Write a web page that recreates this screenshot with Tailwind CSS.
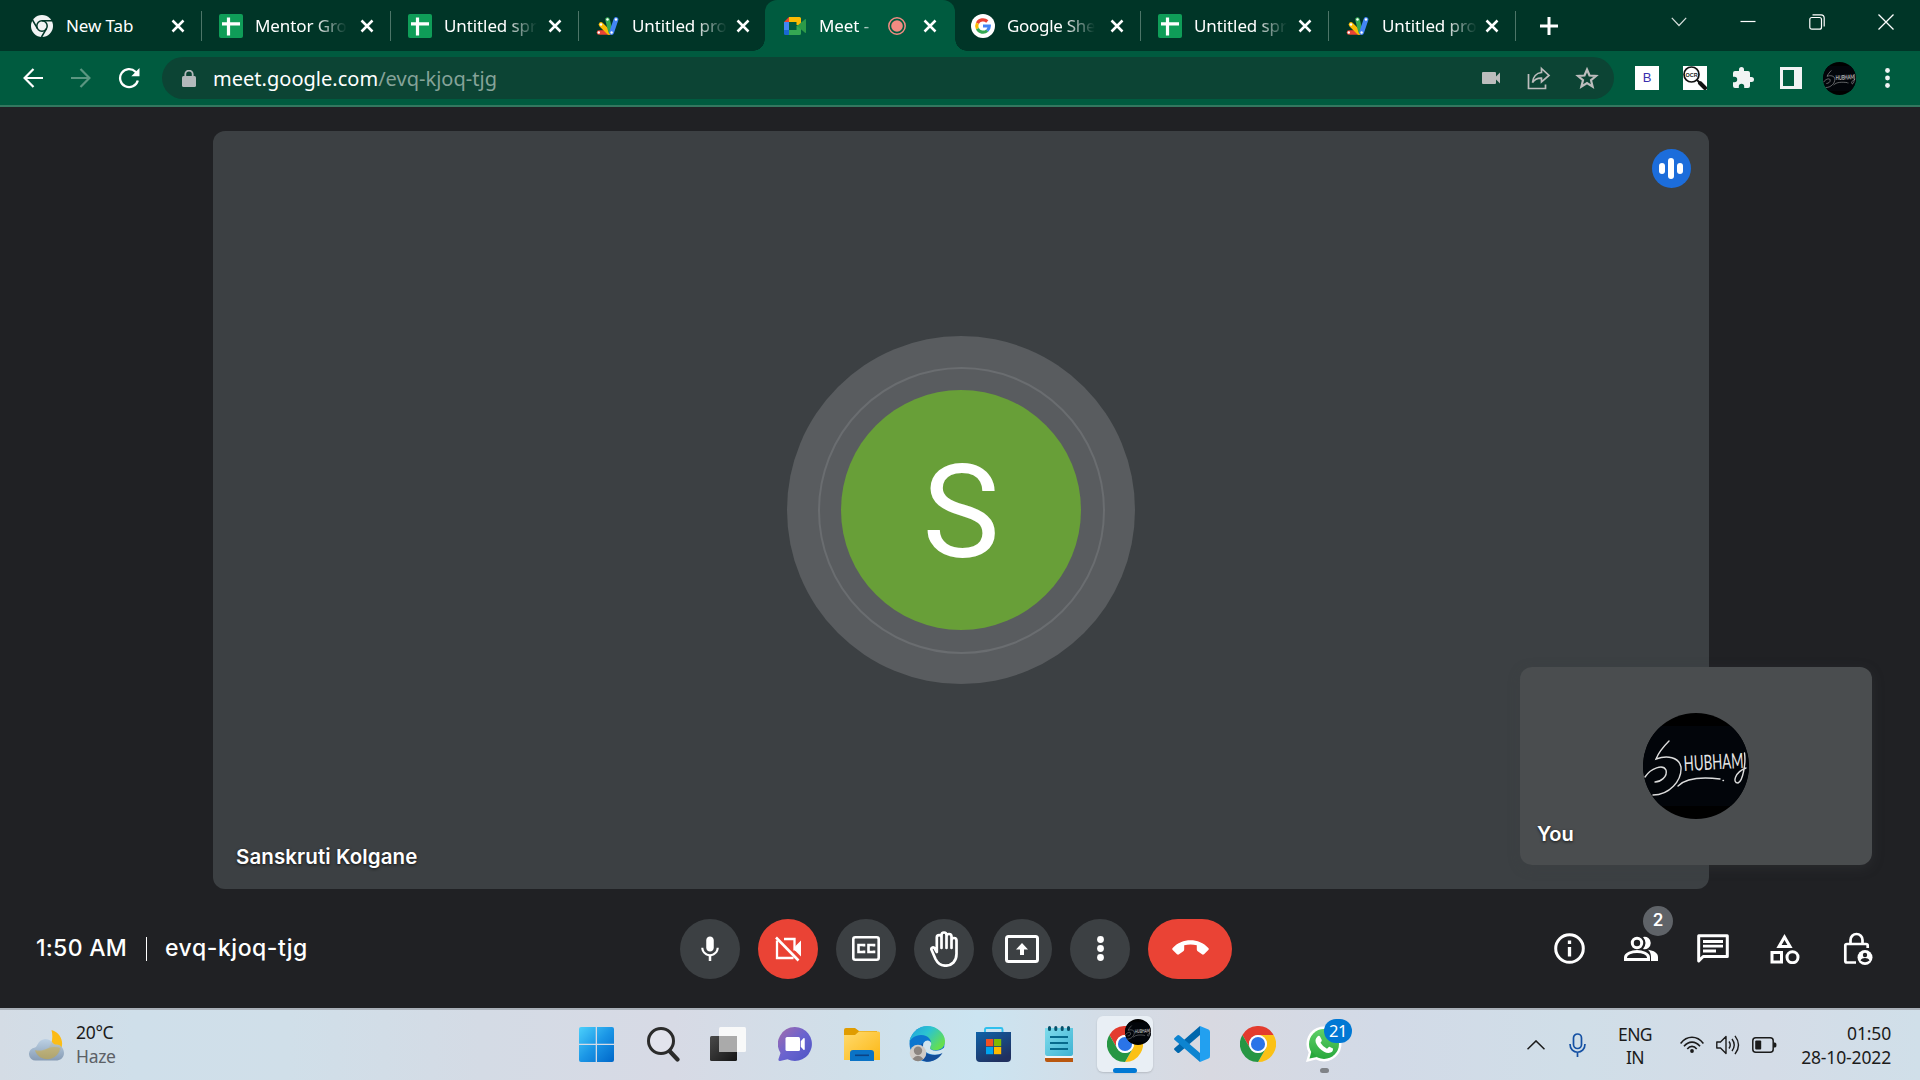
<!DOCTYPE html>
<html lang="en">
<head>
<meta charset="utf-8">
<title>Meet - evq-kjoq-tjg</title>
<script src="https://cdn.jsdelivr.net/npm/@tailwindcss/browser@4"></script>
</head>
<body class="h-[1080px] w-[1920px] overflow-hidden bg-[#202124] font-['Noto_Sans',sans-serif]">

<!-- shared symbols -->
<svg class="absolute h-0 w-0">
  <defs>
    <linearGradient id="gWin" gradientUnits="userSpaceOnUse" x1="0" y1="0" x2="35" y2="35"><stop offset="0" stop-color="#4cd0fb"/><stop offset=".5" stop-color="#1b96e6"/><stop offset="1" stop-color="#0067c9"/></linearGradient>
    <linearGradient id="gDark" x1="0" y1="0" x2="1" y2="1"><stop offset="0" stop-color="#4a4a4a"/><stop offset="1" stop-color="#151515"/></linearGradient>
    <linearGradient id="gChat" x1="0" y1="0" x2="1" y2="1"><stop offset="0" stop-color="#a56cab"/><stop offset=".5" stop-color="#6a63cf"/><stop offset="1" stop-color="#4d55c4"/></linearGradient>
    <linearGradient id="gFold" x1="0" y1="0" x2="1" y2="1"><stop offset="0" stop-color="#ffda6d"/><stop offset="1" stop-color="#fcb714"/></linearGradient>
    <linearGradient id="gEdge" x1="0" y1="0" x2="1" y2=".6"><stop offset="0" stop-color="#1f9fe0"/><stop offset=".5" stop-color="#2cc4d0"/><stop offset="1" stop-color="#66df4e"/></linearGradient>
    <linearGradient id="gStore" x1="0" y1="0" x2=".6" y2="1"><stop offset="0" stop-color="#0f62a8"/><stop offset="1" stop-color="#20305f"/></linearGradient>
    <linearGradient id="gNote" x1="0" y1="0" x2="1" y2="1"><stop offset="0" stop-color="#7fdcec"/><stop offset="1" stop-color="#3fb3d3"/></linearGradient>
    <linearGradient id="gMoon" x1="0" y1="0" x2="0" y2="1"><stop offset="0" stop-color="#fdb913"/><stop offset="1" stop-color="#f9c21a"/></linearGradient>
    <linearGradient id="gCloud" x1="0" y1="0" x2="0" y2="1"><stop offset="0" stop-color="#b9cfe4"/><stop offset="1" stop-color="#7d93ad"/></linearGradient>
    <linearGradient id="gWa" x1="0" y1="0" x2="0" y2="1"><stop offset="0" stop-color="#5fd068"/><stop offset="1" stop-color="#28a83c"/></linearGradient>
  </defs>
  <symbol id="close" viewBox="0 0 14 14"><path d="M1.500 1.500l11 11M12.500 1.500l-11 11" stroke="#fff" stroke-width="2.500"/></symbol>
  <symbol id="sheets" viewBox="0 0 24 24"><rect width="24" height="24" rx="2" fill="#0f9d58"/><path d="M9.500 3.500v18M3 9.800h18" stroke="#fff" stroke-width="3.200"/></symbol>
  <symbol id="script" viewBox="0 0 24 20">
    <path d="M3 16.500h11" stroke="#ea4335" stroke-width="4.600" stroke-linecap="round"/>
    <path d="M5 8.500l8 8" stroke="#fbbc04" stroke-width="4.600" stroke-linecap="round"/>
    <path d="M11.500 3.500l3 12" stroke="#34a853" stroke-width="4.600" stroke-linecap="round"/>
    <path d="M20 3.500l-4.400 13" stroke="#4285f4" stroke-width="4.800" stroke-linecap="round"/>
    <g fill="#fff"><circle cx="2.800" cy="16.500" r="1.200"/><circle cx="5" cy="8.500" r="1.200"/><circle cx="11.500" cy="3.500" r="1.200"/><circle cx="20" cy="3.500" r="1.200"/><circle cx="15.600" cy="16.500" r="1.200"/></g>
  </symbol>
  <symbol id="chrome" viewBox="0 0 48 48">
    <path d="M3.200 12A24 24 0 0 1 44.800 12H24A12 12 0 0 0 13.600 30z" fill="#e33b2e"/>
    <path d="M44.800 12A24 24 0 0 1 24 48L34.400 30A12 12 0 0 0 24 12z" fill="#fbc116"/>
    <path d="M24 48A24 24 0 0 1 3.200 12L13.600 30A12 12 0 0 0 34.400 30z" fill="#269643"/>
    <circle cx="24" cy="24" r="12" fill="#fff"/><circle cx="24" cy="24" r="9.400" fill="#2a74e8"/>
  </symbol>
  <symbol id="signature" viewBox="0 0 106 106">
    <circle cx="53" cy="53" r="53" fill="#000"/><path d="M18.300 13H87.700A53 53 0 0 1 87.700 93H18.300A53 53 0 0 1 18.300 13z" fill="#02050a"/>
    <g fill="none" stroke="#dcdcdc" stroke-width="1.400" stroke-linecap="round">
      <path d="M26 28C20 34 15 41 13 46C24 42 36 44 38 54C39 68 26 82 10 82"/>
      <path d="M2 64C8 55 20 51 23 57C25 64 17 69 12 69"/>
      <path d="M35 73C44 64 60 64 77 66M80 67.500h.5"/>
      <path d="M101.500 40C103 50 100 68 95 70C89 70 92 59 103 55"/>
    </g>
    <text x="41" y="58" font-family="Lato" font-weight="400" font-size="21" fill="#e6e6e6" textLength="60" lengthAdjust="spacingAndGlyphs" transform="rotate(-3 41 58)">HUBHAM</text>
  </symbol>
</svg>

<div class="flex h-full w-full flex-col">

  <!-- tab strip -->
  <header class="flex h-[51px] shrink-0 bg-[#003527] pl-[13px] text-[17px] tracking-[-0.1px] text-white">
    <div class="flex h-full w-[188px] items-center pl-[17px] pr-4">
      <svg class="mr-3 h-6 w-6 shrink-0" viewBox="0 0 24 24"><circle cx="12" cy="12" r="11" fill="#f1f3f4"/><circle cx="12" cy="12" r="5.200" fill="none" stroke="#003527" stroke-width="1.500"/><path d="M12 6.800h10M7.500 14.600L2.500 6M16.500 14.600L11.500 23" stroke="#003527" stroke-width="1.500"/></svg>
      <span class="whitespace-nowrap">New Tab</span>
      <svg class="ml-auto h-[14px] w-[14px] shrink-0"><use href="#close"/></svg>
    </div>
    <div class="flex h-full w-[189px] items-center pr-4">
      <i class="mr-[17px] h-[30px] w-px bg-[#4d7568]"></i>
      <svg class="mr-3 h-6 w-6 shrink-0"><use href="#sheets"/></svg>
      <span class="whitespace-nowrap [mask-image:linear-gradient(90deg,#000_65%,transparent)]">Mentor Gro</span>
      <svg class="ml-auto h-[14px] w-[14px] shrink-0"><use href="#close"/></svg>
    </div>
    <div class="flex h-full w-[188px] items-center pr-4">
      <i class="mr-[17px] h-[30px] w-px bg-[#4d7568]"></i>
      <svg class="mr-3 h-6 w-6 shrink-0"><use href="#sheets"/></svg>
      <span class="whitespace-nowrap [mask-image:linear-gradient(90deg,#000_65%,transparent)]">Untitled spr</span>
      <svg class="ml-auto h-[14px] w-[14px] shrink-0"><use href="#close"/></svg>
    </div>
    <div class="flex h-full w-[187px] items-center pr-[15px]">
      <i class="mr-[17px] h-[30px] w-px bg-[#4d7568]"></i>
      <svg class="mr-3 h-5 w-6 shrink-0"><use href="#script"/></svg>
      <span class="whitespace-nowrap [mask-image:linear-gradient(90deg,#000_65%,transparent)]">Untitled pro</span>
      <svg class="ml-auto h-[14px] w-[14px] shrink-0"><use href="#close"/></svg>
    </div>
    <!-- active tab -->
    <div class="relative flex h-full w-[190px] items-center rounded-t-xl bg-[#005b3f] pl-[18px] pr-[18px]">
      <i class="absolute -left-3 bottom-0 h-3 w-3 bg-[radial-gradient(circle_at_0_0,transparent_11.5px,#005b3f_12px)]"></i>
      <i class="absolute -right-3 bottom-0 h-3 w-3 bg-[radial-gradient(circle_at_100%_0,transparent_11.5px,#005b3f_12px)]"></i>
      <svg class="mr-3 h-[18px] w-6 shrink-0" viewBox="0 0 24 18"><path d="M1 5L6 0V5z" fill="#ea4335"/><path d="M1 5H6V13H1z" fill="#4285f4"/><path d="M1 13H6V18H2.500A1.500 1.500 0 0 1 1 16.500z" fill="#1967d2"/><path d="M6 0H16.500A1.500 1.500 0 0 1 18 1.500V9L13.500 8V5H6z" fill="#fbbc04"/><path d="M6 13H13.500V9L18 8V16.500A1.500 1.500 0 0 1 16.500 18H6z" fill="#34a853"/><path d="M14 9L22 2.200Q23 1.500 23 3V15Q23 16.500 22 15.800z" fill="#2c9a48"/></svg>
      <span class="w-[69px] whitespace-nowrap [mask-image:linear-gradient(90deg,#000_60%,transparent_85%)]">Meet -</span>
      <svg class="h-[18px] w-[18px] shrink-0" viewBox="0 0 18 18"><circle cx="9" cy="9" r="5.800" fill="#f28b82"/><circle cx="9" cy="9" r="8.200" fill="none" stroke="#f28b82" stroke-width="1.500"/></svg>
      <svg class="ml-auto h-[14px] w-[14px] shrink-0"><use href="#close"/></svg>
    </div>
    <div class="flex h-full w-[185px] items-center pl-4 pr-4">
      <svg class="mr-3 h-6 w-6 shrink-0" viewBox="0 0 24 24"><circle cx="12" cy="12" r="12" fill="#fff"/><g fill="none" stroke-width="3.200"><path d="M16.300 7.500A6.300 6.300 0 0 0 6.400 9.200" stroke="#ea4335"/><path d="M6.400 9.200A6.300 6.300 0 0 0 6.400 14.800" stroke="#fbbc04"/><path d="M6.400 14.800A6.300 6.300 0 0 0 16.200 16.600" stroke="#34a853"/><path d="M16.200 16.600A6.300 6.300 0 0 0 18.300 12H12" stroke="#4285f4"/></g></svg>
      <span class="whitespace-nowrap tracking-[-0.3px] [mask-image:linear-gradient(90deg,#000_65%,transparent)]">Google She</span>
      <svg class="ml-auto h-[14px] w-[14px] shrink-0"><use href="#close"/></svg>
    </div>
    <div class="flex h-full w-[188px] items-center pr-4">
      <i class="mr-[17px] h-[30px] w-px bg-[#4d7568]"></i>
      <svg class="mr-3 h-6 w-6 shrink-0"><use href="#sheets"/></svg>
      <span class="whitespace-nowrap [mask-image:linear-gradient(90deg,#000_65%,transparent)]">Untitled spr</span>
      <svg class="ml-auto h-[14px] w-[14px] shrink-0"><use href="#close"/></svg>
    </div>
    <div class="flex h-full w-[187px] items-center pr-4">
      <i class="mr-[17px] h-[30px] w-px bg-[#4d7568]"></i>
      <svg class="mr-3 h-5 w-6 shrink-0"><use href="#script"/></svg>
      <span class="whitespace-nowrap [mask-image:linear-gradient(90deg,#000_65%,transparent)]">Untitled pro</span>
      <svg class="ml-auto h-[14px] w-[14px] shrink-0"><use href="#close"/></svg>
    </div>
    <div class="flex items-center">
      <i class="h-[30px] w-px bg-[#4d7568]"></i>
      <svg class="ml-6 h-[18px] w-[18px]" viewBox="0 0 18 18"><path d="M9 0v18M0 9h18" stroke="#fff" stroke-width="3"/></svg>
    </div>
    <div class="ml-auto grid h-11 w-[276px] grid-cols-4 place-items-center">
      <svg class="h-[10px] w-4" viewBox="0 0 16 10" fill="none" stroke="#d5dedb" stroke-width="1.200"><path d="M.8.800L8 8.500 15.200.800"/></svg>
      <svg class="h-4 w-4" viewBox="0 0 16 16"><path d="M.5 7.500h15" stroke="#fff" stroke-width="1.200"/></svg>
      <svg class="h-4 w-4" viewBox="0 0 16 16" fill="none" stroke="#fff" stroke-width="1.200"><rect x=".8" y="3.500" width="11.700" height="11.700" rx="2"/><path d="M3.500.8H12A3.200 3.200 0 0 1 15.200 4V12.500"/></svg>
      <svg class="h-4 w-4" viewBox="0 0 16 16"><path d="M.5.500l15 15M15.500.500l-15 15" stroke="#fff" stroke-width="1.300"/></svg>
    </div>
  </header>

  <!-- toolbar -->
  <nav class="flex h-14 shrink-0 items-center border-b-2 border-[#33775f] bg-[#005b3f]">
    <div class="flex w-[162px] items-center gap-[28px] pl-[23px]">
      <svg class="h-5 w-5" viewBox="0 0 20 20" fill="none" stroke="#fff" stroke-width="2.200"><path d="M20 10H2M10.500 1L1.600 10l8.900 9"/></svg>
      <svg class="h-5 w-5" viewBox="0 0 20 20" fill="none" stroke="#5b9681" stroke-width="2.200"><path d="M0 10H18M9.500 1l8.900 9-8.900 9"/></svg>
      <svg class="-ml-px h-[22px] w-[22px]" viewBox="0 0 22 22" fill="none" stroke="#fff" stroke-width="2.300"><path d="M19.800 13.500A9 9 0 1 1 17.500 4.800L20 7.500"/><path d="M21.500 1V9.200H13.300z" fill="#fff" stroke="none"/></svg>
    </div>
    <div class="flex h-[42px] w-[1452px] items-center rounded-full bg-[#0c4434] pl-5 pr-[15px]">
      <svg class="mr-[17px] h-[17px] w-[14px]" viewBox="0 0 14 17"><rect x="0" y="6" width="14" height="11" rx="1.500" fill="#b3b9bb"/><path d="M3.300 7V4.300a3.700 3.700 0 0 1 7.400 0V7" fill="none" stroke="#b3b9bb" stroke-width="1.800"/></svg>
      <span class="mt-px text-[20px] tracking-[0.02px] text-white">meet.google.com<span class="text-[#86a399]">/evq-kjoq-tjg</span></span>
      <div class="ml-auto flex items-center gap-6">
        <svg class="h-6 w-6" viewBox="0 0 24 24" fill="#bdbdbd"><path d="M3 7a1 1 0 0 1 1-1h12a1 1 0 0 1 1 1v3.500l4-4v11l-4-4V17a1 1 0 0 1-1 1H4a1 1 0 0 1-1-1z"/></svg>
        <svg class="h-6 w-6" viewBox="0 0 24 24" fill="none" stroke="#bdbdbd" stroke-width="1.700"><path d="M1.500 8v14.500h17V18.500"/><path d="M14.500 2.500L22 9.500l-7.500 6.500v-3.800C10 12 7.500 13.500 5.500 16.500 6 11 9.500 7 14.500 6.500z"/></svg>
        <svg class="h-6 w-6" viewBox="0 0 24 24" fill="none" stroke="#bdbdbd" stroke-width="2.200"><path d="M12 3.500l2.500 6 6.500.5-5 4.200 1.600 6.400L12 17.100 6.400 20.600 8 14.200 3 10l6.500-.5z"/></svg>
      </div>
    </div>
    <div class="ml-[9px] grid w-[288px] grid-cols-6 place-items-center">
      <div class="flex h-6 w-6 items-center justify-center bg-white font-['Liberation_Sans',sans-serif] text-[13px] text-[#3a2fae]">B</div>
      <svg class="h-6 w-6" viewBox="0 0 24 24"><rect width="24" height="24" fill="#fff"/><circle cx="8.500" cy="8.500" r="7.500" fill="#fff" stroke="#111" stroke-width="1.700"/><path d="M14 14l2.500 2.500" stroke="#111" stroke-width="2"/><path d="M17 17l5 5" stroke="#111" stroke-width="4" stroke-linecap="round"/><text x="8.500" y="10.600" font-family="Liberation Sans" font-size="5.500" font-weight="bold" text-anchor="middle" fill="#222">OCR</text></svg>
      <svg class="h-6 w-6" viewBox="0 0 24 24" fill="#f1f3f4"><path d="M20.500 11H19V7a2 2 0 0 0-2-2h-4V3.500a2.500 2.500 0 0 0-5 0V5H4a2 2 0 0 0-2 2v3.800h1.500a2.700 2.700 0 0 1 0 5.400H2V20a2 2 0 0 0 2 2h3.800v-1.500a2.700 2.700 0 0 1 5.400 0V22H17a2 2 0 0 0 2-2v-4h1.500a2.500 2.500 0 0 0 0-5z"/></svg>
      <svg class="h-[22px] w-[22px]" viewBox="0 0 22 22"><path fill-rule="evenodd" d="M0 0H22V22H0zM3 3V19H14V3z" fill="#f1f3f4"/></svg>
      <svg class="h-[33px] w-[33px]"><use href="#signature"/></svg>
      <svg class="h-5 w-[5px]" viewBox="0 0 5 20" fill="#f1f3f4"><circle cx="2.500" cy="2.500" r="2.400"/><circle cx="2.500" cy="10" r="2.400"/><circle cx="2.500" cy="17.500" r="2.400"/></svg>
    </div>
  </nav>

  <!-- call -->
  <main class="relative flex h-[901px] shrink-0 flex-col bg-[#202124] pt-6">
    <section class="relative ml-[213px] flex h-[758px] w-[1496px] items-center justify-center rounded-xl bg-[#3c4043]">
      <div class="flex h-[348px] w-[348px] items-center justify-center rounded-full bg-[#595c5f]">
        <div class="flex h-[287px] w-[287px] items-center justify-center rounded-full border-2 border-[#6a6d70]">
          <div class="flex h-[240px] w-[240px] shrink-0 items-center justify-center rounded-full bg-[#689f38] pt-[5px] font-['Roboto',sans-serif] text-[130px] leading-none text-white">S</div>
        </div>
      </div>
      <div class="absolute right-[18px] top-[18px] flex h-[39px] w-[39px] items-center justify-center gap-[3px] rounded-full bg-[#1c6ddb] pr-px">
        <i class="h-[11px] w-[6px] rounded-full bg-white"></i><i class="h-[21px] w-[6px] rounded-full bg-white"></i><i class="h-[11px] w-[6px] rounded-full bg-white"></i>
      </div>
      <div class="absolute bottom-[18px] left-[23px] font-['Inter',sans-serif] text-[20.500px] font-semibold leading-7 tracking-[0.1px] text-white [text-shadow:0_1px_3px_rgba(0,0,0,.7)]">Sanskruti Kolgane</div>
    </section>

    <aside class="absolute left-[1520px] top-[560px] flex h-[198px] w-[352px] items-center justify-center rounded-xl bg-[#4a4d4f] shadow-[0_3px_12px_rgba(60,64,67,.35)]">
      <svg class="h-[106px] w-[106px]"><use href="#signature"/></svg>
      <div class="absolute bottom-[17px] left-[17px] font-['Inter',sans-serif] text-[20px] font-semibold leading-7 text-white [text-shadow:0_1px_3px_rgba(0,0,0,.7)]">You</div>
    </aside>

    <div class="grid h-[119px] grid-cols-[1fr_552px_1fr] items-center">
      <div class="flex items-center pl-9 font-['Inter',sans-serif] text-[23px] font-medium text-white">
        <span class="w-[91px] whitespace-nowrap tracking-[0.3px]">1:50 AM</span>
        <i class="ml-[19px] h-6 w-px bg-white"></i>
        <span class="ml-[18px] whitespace-nowrap tracking-[0.55px]">evq-kjoq-tjg</span>
      </div>
      <div class="flex -translate-x-1 gap-[18px]">
        <button class="flex h-[60px] w-[60px] items-center justify-center rounded-full bg-[#3c4043]"><svg class="h-[30px] w-[30px]" viewBox="0 0 24 24" fill="#fff"><path d="M12 14c1.660 0 3-1.340 3-3V5c0-1.660-1.340-3-3-3S9 3.340 9 5v6c0 1.660 1.340 3 3 3zm5.300-3c0 3-2.540 5.100-5.300 5.100S6.700 14 6.700 11H5c0 3.410 2.720 6.230 6 6.720V21.500h2v-3.780c3.280-.48 6-3.300 6-6.720z"/></svg></button>
        <button class="flex h-[60px] w-[60px] items-center justify-center rounded-full bg-[#ea4335]"><svg class="h-[26px] w-[26px]" viewBox="0 0 26 26" fill="none" stroke="#fff" stroke-width="2.300"><path d="M9 3H19.500V14.500M2 4.500V22H18.500"/><path d="M1 1.500L23.500 24.500" stroke-width="2.600"/><path d="M20 10.500l6-6v16l-6-6z" fill="#fff" stroke="none"/></svg></button>
        <button class="flex h-[60px] w-[60px] items-center justify-center rounded-full bg-[#3c4043]"><svg class="h-[25px] w-7" viewBox="0 0 28 25" fill="none" stroke="#fff" stroke-width="2.600"><rect x="1.300" y="1.300" width="25.400" height="22.400" rx="2"/><path d="M12 10.500V9H6.500v7H12V14.500M22 10.500V9h-5.500v7H22V14.500" stroke-width="2.600"/></svg></button>
        <button class="flex h-[60px] w-[60px] items-center justify-center rounded-full bg-[#3c4043]"><svg class="h-9 w-7" viewBox="0 0 28 36" fill="none" stroke="#fff" stroke-width="2.700" stroke-linecap="round" stroke-linejoin="round"><path d="M6.800 21V6.500a2.300 2.300 0 0 1 4.700 0V17M11.500 17V4a2.300 2.300 0 0 1 5 0V17M16.500 17V5.500a2.300 2.300 0 0 1 5 0V17M21.500 17V9.500a2.300 2.300 0 0 1 5 0V23C26.500 30 22 34.700 15.500 34.700C10.500 34.700 7.500 32 5.500 28L1.400 18.500C1 16.500 3.500 15.500 4.800 17.500L6.800 21"/></svg></button>
        <button class="flex h-[60px] w-[60px] items-center justify-center rounded-full bg-[#3c4043]"><svg class="h-7 w-[34px]" viewBox="0 0 34 28" fill="none" stroke="#fff"><rect x="1.500" y="1.500" width="31" height="25" rx="2" stroke-width="3"/><path d="M17 8L23 14.500H19V20h-4v-5.500H11z" fill="#fff" stroke="none"/></svg></button>
        <button class="flex h-[60px] w-[60px] items-center justify-center rounded-full bg-[#3c4043]"><svg class="h-[25px] w-[7px]" viewBox="0 0 7 25" fill="#fff"><circle cx="3.500" cy="3.500" r="3.400"/><circle cx="3.500" cy="12.500" r="3.400"/><circle cx="3.500" cy="21.500" r="3.400"/></svg></button>
        <button class="flex h-[60px] w-[84px] shrink-0 items-center justify-center rounded-full bg-[#ea4335] pb-0.5"><svg class="h-[15px] w-[37px]" viewBox="0 0 37 15" fill="#fff"><path d="M.7 8C10 -2.300 27 -2.300 36.300 8Q37.300 9 36.300 10L32 14.200Q31 15 30 14.300L25.700 11.200Q24.800 10.500 24.800 9.500V5.300Q18.500 3.500 12.200 5.300V9.500Q12.200 10.500 11.300 11.200L7 14.300Q6 15 5 14.200L.7 10Q-.3 9 .7 8z"/></svg></button>
      </div>
      <div class="ml-auto mr-[27px] grid w-[360px] grid-cols-5 place-items-center">
        <svg class="h-[31px] w-[31px]" viewBox="0 0 31 31" fill="none" stroke="#fff"><circle cx="15.500" cy="15.500" r="13.800" stroke-width="3"/><path d="M15.500 14v9.500M15.500 7.500v3.500" stroke-width="3.300"/></svg>
        <div class="relative">
          <svg class="h-9 w-9" viewBox="0 0 36 36" fill="none" stroke="#fff" stroke-width="3"><circle cx="14" cy="12" r="4.700"/><path d="M2.500 28.500V26.500C2.500 22.500 9 20.500 14 20.500S25.500 22.500 25.500 26.500V28.500z"/><path d="M20 6A6.200 6.200 0 1 1 20 18Q25 12 20 6zM25 18.700C31 19.500 35 22 35 26V30H28V26Q28 21.500 25 18.700z" fill="#fff" stroke="none"/></svg>
          <span class="absolute -top-[25px] left-[20px] flex h-[30px] w-[30px] items-center justify-center rounded-full bg-[#5f6368] font-['Inter',sans-serif] text-[17px] font-semibold text-white">2</span>
        </div>
        <svg class="h-[30px] w-8" viewBox="0 0 32 30" fill="none" stroke="#fff"><path d="M1.700 27V1.700H30.300V22.500H6.200z" stroke-width="3" stroke-linejoin="round"/><path d="M6 7.500H26M6 12.200H26M6 17H19" stroke-width="2.800"/></svg>
        <svg class="h-[30px] w-[30px]" viewBox="0 0 30 30" fill="none" stroke="#fff" stroke-width="3"><path d="M14.500 3L20 12.500H9z"/><rect x="2" y="18.500" width="9.500" height="9.500"/><circle cx="22.500" cy="23.200" r="5.500"/></svg>
        <svg class="ml-0.5 h-[34px] w-[30px]" viewBox="0 0 30 34"><g fill="none" stroke="#fff" stroke-width="2.700"><path d="M13 30.500H4Q2.300 30.500 2.300 29V13.500Q2.300 12 4 12H23Q24.700 12 24.700 13.500V16"/><path d="M7.500 12V8a6 6 0 0 1 12 0V12"/></g><circle cx="22" cy="25.500" r="7.500" fill="#fff"/><circle cx="22" cy="23" r="2.200" fill="#202124"/><path d="M17.500 28.500a5.200 5.200 0 0 1 9 0Q22 32 17.500 28.500z" fill="#202124"/></svg>
      </div>
    </div>
  </main>

  <!-- taskbar -->
  <footer class="grid h-[72px] shrink-0 grid-cols-[563px_794px_563px] border-t-2 border-[#a9b0b8] bg-[linear-gradient(90deg,#d4dce5_0%,#cfdfea_7%,#d0dfe9_15%,#d4dbe5_25%,#d7dae5_35%,#d0dfe9_44%,#cbe4f1_51%,#d3dde7_57%,#d8d9e1_63%,#d2dae7_72%,#d0dee8_82%,#d4dce7_92%,#d0dfe9_100%)]">
    <div class="flex pl-[29px] pt-[10px]">
      <svg class="mt-[10px] h-[31px] w-[35px]" viewBox="0 0 35 31"><path d="M22.500 0C35 4 36 18 28 25C22 31 10 31 6 21C18 24 26 14 22.500 0z" fill="url(#gMoon)"/><path d="M7 30.500A6.500 6.500 0 0 1 6 17.500C9 17 8 10 16 9C22 9 24 14 26 14.500C32 13.500 35 19 35 23C35 28 31 30.500 27 30.500z" fill="url(#gCloud)" opacity=".88"/><path d="M6 20C16 23 20 14 31 18C29 32 10 33 6 20z" fill="#d4ad35" opacity=".45"/></svg>
      <div class="ml-3 text-[17.500px] leading-6 tracking-[-0.3px] text-[#1b1b1b]"><div>20°C</div><div class="text-[#5c6166]">Haze</div></div>
    </div>

    <div class="grid grid-cols-12 place-items-center pb-[2px]">
      <svg class="ml-px h-[35px] w-[35px]" viewBox="0 0 35 35" fill="url(#gWin)"><path d="M2 0H16.700V16.700H0V2Q0 0 2 0zM18 0H33Q35 0 35 2V16.700H18zM0 18H16.700V35H2Q0 35 0 33zM18 18H35V33Q35 35 33 35H18z"/></svg>
      <svg class="ml-0.5 h-[35px] w-[33px]" viewBox="0 0 33 35" fill="none" stroke="#2b2b2b"><circle cx="14" cy="14" r="12.500" stroke-width="3" fill="#e2e3ec"/><path d="M23 24.500l7.500 8" stroke-width="4.200" stroke-linecap="round"/></svg>
      <svg class="h-[34px] w-9" viewBox="0 0 36 34"><rect x="0" y="9" width="27" height="25" rx="1.500" fill="url(#gDark)"/><rect x="9" y="0" width="27" height="25" rx="1.500" fill="#fafafa" opacity=".95"/><path d="M9 9H27V25H10.500Q9 25 9 23.500z" fill="#aaa"/></svg>
      <svg class="h-[34px] w-[34px]" viewBox="0 0 34 34"><path d="M17 0A17 17 0 1 1 9.500 32.300L2 34Q0 34 .5 32L2.500 26A17 17 0 0 1 17 0z" fill="url(#gChat)"/><rect x="7.500" y="10" width="14.500" height="14" rx="1.500" fill="#fff"/><path d="M23.500 14.500L26 11.800V22.200L23.500 19.500z" fill="#fff" stroke="#fff" stroke-width="1.500" stroke-linejoin="round"/></svg>
      <svg class="ml-0.5 h-[33px] w-9" viewBox="0 0 36 33"><path d="M0 2Q0 0 2 0H11L15 3H33V10H0z" fill="#e09c00"/><path d="M0 7H11L15 3.500H34.500Q36 3.500 36 5V32H0z" fill="url(#gFold)"/><path d="M6 33V25Q6 22 9 22H27Q30 22 30 25V33z" fill="#0a73c6"/><path d="M11 27.300H25" stroke="#0c4384" stroke-width="1.600"/></svg>
      <svg class="h-9 w-9" viewBox="0 0 36 36"><circle cx="18" cy="18" r="17.500" fill="#0d76cf"/><path d="M0 17C2 6 10 0 18 0C29 0 36 8 36 15C36 23 29 25 24 24C20 23 21 21 22 19C23 15 20 9 12 9C6 9 1 13 0 17z" fill="url(#gEdge)"/><path d="M14 17C12 24 17 29 24 29C29 29 32 27 34 26C29 35 19 38 13 34C7 30 9 20 14 17z" fill="#124d9a"/><path d="M14.500 17C17 13 22 14 22.300 18C22 20 20 22 22 23.500C26 26 31 25 36 21L34.500 26.500C28 30 21 29 17 26C14 24 13.500 20 14.500 17z" fill="#d0e4ee"/><circle cx="9" cy="27" r="8.300" fill="#d0cbc6"/><circle cx="9" cy="24.800" r="4.200" fill="#8c8580"/><path d="M3.500 33Q9 26.500 14.500 33Q9 37.500 3.500 33z" fill="#8c8580"/></svg>
      <svg class="h-[35px] w-[35px]" viewBox="0 0 35 35"><path d="M9 6V2.500Q9 1 10.500 1H25Q26.500 1 26.500 2.500V6" fill="none" stroke="#2fc0ee" stroke-width="1.900"/><path d="M0 5H35V31Q35 35 31 35H4Q0 35 0 31z" fill="url(#gStore)"/><path d="M10 12h7.200v7.200H10z" fill="#f25022"/><path d="M18 12h7.200v7.200H18z" fill="#7fba00"/><path d="M10 20h7.200v7.200H10z" fill="#00a4ef"/><path d="M18 20h7.200v7.200H18z" fill="#ffb900"/></svg>
      <svg class="h-9 w-7" viewBox="0 0 28 36"><path d="M0 31H28V36H2Q0 36 0 34z" fill="#b9570f"/><path d="M0 28H28V32H0z" fill="#f3f3f3"/><path d="M0 2H28V28Q28 30 26 30H2Q0 30 0 28z" fill="url(#gNote)"/><path d="M5 11H23M5 17H23M5 23H23" stroke="#066a8c" stroke-width="1.900"/><path d="M4.500 1.500v2M10.800 1.500v2M17.200 1.500v2M23.500 1.500v2" stroke="#07516b" stroke-width="3" stroke-linecap="round"/></svg>
      <div class="relative flex h-14 w-14 items-center justify-center rounded-md bg-[#e9eff5] shadow-[0_1px_2px_rgba(0,0,0,.15)]">
        <svg class="h-9 w-9"><use href="#chrome"/></svg>
        <svg class="absolute right-[2px] top-[3px] h-[26px] w-[26px]"><use href="#signature"/></svg>
        <i class="absolute -bottom-px left-4 h-[5px] w-6 rounded-full bg-[#0078d4]"></i>
      </div>
      <svg class="h-9 w-9" viewBox="0 0 36 36"><path d="M26 9L5.500 26.500Q4.300 27.500 3.200 26.500L.5 24Q-.5 23 .7 22L26 0z" fill="#0067ad"/><path d="M26 27L5.500 9.500Q4.300 8.500 3.200 9.500L.5 12Q-.5 13 .7 14L26 36z" fill="#0d84d0"/><path d="M26 0L34.500 3.500Q36 4 36 6V30Q36 32 34.500 32.500L26 36z" fill="#22a0f0"/></svg>
      <svg class="h-9 w-9"><use href="#chrome"/></svg>
      <div class="relative">
        <svg class="h-9 w-9" viewBox="0 0 36 36"><path d="M0 36L2.700 26.500A17.500 17.500 0 1 1 10 33.500z" fill="#fff"/><circle cx="18" cy="18" r="15" fill="url(#gWa)"/><path d="M3.500 32.500L5.500 25L11 31z" fill="#28a83c"/><path d="M11.500 10.500Q13 9 14 10.500L15.800 14Q16 15 14.500 16.700Q17 21 21 22.700Q23 20.500 23.500 20.700L27 22.500Q27.500 26.500 22.500 27C17 27 9 19.500 9.500 14Q9.800 12 11.500 10.500z" fill="#fff"/></svg>
        <span class="absolute -top-[7px] left-[18px] flex h-6 w-7 items-center justify-center rounded-full bg-[#0078d4] text-[16.500px] tracking-[-0.5px] text-white">21</span>
        <i class="absolute -bottom-[11px] left-[14px] h-[5px] w-[9px] rounded-full bg-[#808388]"></i>
      </div>
    </div>

    <div class="flex items-center justify-end pb-px pr-[29px] text-[17.500px] leading-6 text-[#1b1b1b]">
      <svg class="mr-[24px] h-[10px] w-[18px]" viewBox="0 0 18 10" fill="none" stroke="#1b1b1b" stroke-width="1.500"><path d="M.5 9.200L9 .9l8.500 8.300"/></svg>
      <svg class="mr-[31px] h-6 w-[17px]" viewBox="0 0 17 24" fill="none" stroke="#1450a3" stroke-width="1.700"><rect x="4.500" y="1" width="8" height="14.500" rx="4"/><path d="M1 11C1 22 16 22 16 11M8.500 19.500V24"/></svg>
      <div class="mr-[27px] mt-0.5 w-9 text-center leading-[23px] tracking-[-0.6px]"><div>ENG</div><div>IN</div></div>
      <svg class="mr-3 h-[17px] w-6" viewBox="0 0 24 17" fill="none" stroke="#1b1b1b" stroke-width="1.600"><path d="M.6 7.500C7-.8 17-.8 23.400 7.500M4 10.300C8.500 4.700 15.500 4.700 20 10.300M7.300 13C10 9.500 14 9.500 16.700 13"/><circle cx="12" cy="15" r="1.900" fill="#1b1b1b" stroke="none"/></svg>
      <svg class="mr-3 h-5 w-6" viewBox="0 0 24 20" fill="none" stroke="#1b1b1b" stroke-width="1.400"><path d="M.8 7H4.500L10 1.500V18.500L4.500 13H.8z" stroke-linejoin="round"/><path d="M13 6.500Q15.500 10 13 13.500M16 4Q20.500 10 16 16M19 .8Q26 10 19 19.200"/></svg>
      <svg class="mr-[22px] h-4 w-[25px]" viewBox="0 0 25 16"><rect x=".8" y=".8" width="20.400" height="14.400" rx="3" fill="none" stroke="#1b1b1b" stroke-width="1.500"/><rect x="3.200" y="3.500" width="6" height="9" rx="1" fill="#1b1b1b"/><path d="M21.500 5.500H23Q24.500 5.500 24.500 8T23 10.500H21.500z" fill="#1b1b1b"/></svg>
      <div class="w-[92px] whitespace-nowrap text-right tracking-[-0.15px]"><div>01:50</div><div>28-10-2022</div></div>
    </div>
  </footer>
</div>
</body>
</html>
